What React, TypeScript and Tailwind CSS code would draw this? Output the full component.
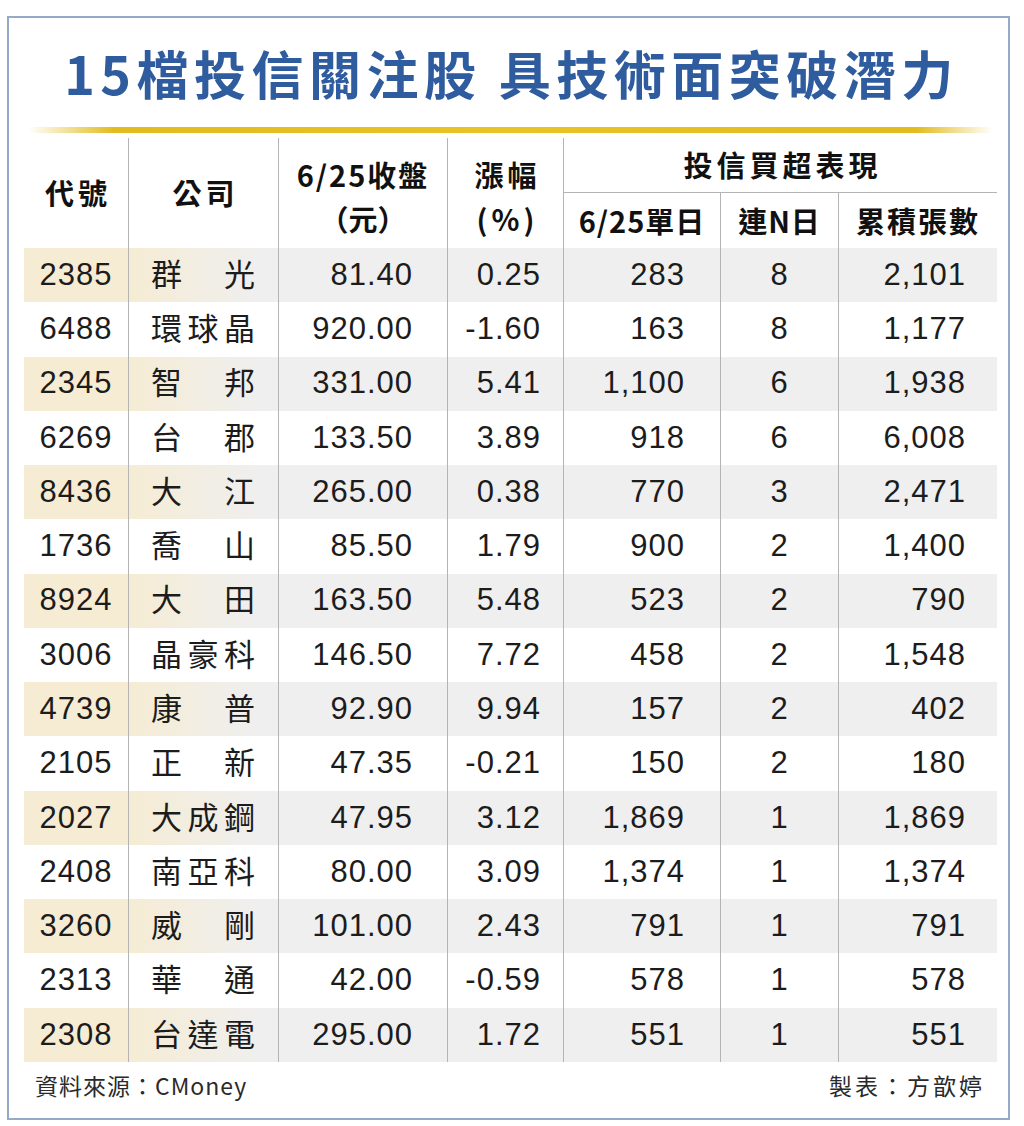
const rows: [string, string, string, string, string, string, string][] = [
  ["2385", "群光", "81.40", "0.25", "283", "8", "2,101"],
  ["6488", "環球晶", "920.00", "-1.60", "163", "8", "1,177"],
  ["2345", "智邦", "331.00", "5.41", "1,100", "6", "1,938"],
  ["6269", "台郡", "133.50", "3.89", "918", "6", "6,008"],
  ["8436", "大江", "265.00", "0.38", "770", "3", "2,471"],
  ["1736", "喬山", "85.50", "1.79", "900", "2", "1,400"],
  ["8924", "大田", "163.50", "5.48", "523", "2", "790"],
  ["3006", "晶豪科", "146.50", "7.72", "458", "2", "1,548"],
  ["4739", "康普", "92.90", "9.94", "157", "2", "402"],
  ["2105", "正新", "47.35", "-0.21", "150", "2", "180"],
  ["2027", "大成鋼", "47.95", "3.12", "1,869", "1", "1,869"],
  ["2408", "南亞科", "80.00", "3.09", "1,374", "1", "1,374"],
  ["3260", "威剛", "101.00", "2.43", "791", "1", "791"],
  ["2313", "華通", "42.00", "-0.59", "578", "1", "578"],
  ["2308", "台達電", "295.00", "1.72", "551", "1", "551"],
];

const cols = "grid grid-cols-[104px_150px_169px_116px_157px_118px_159px]";
const line = "border-l border-[#b4b4b4]";

function Row({ r, shaded }: { r: (typeof rows)[number]; shaded: boolean }) {
  const [code, name, close, pct, day, streak, total] = r;
  return (
    <div
      className={`${cols} h-[54.27px] text-[31px] tracking-[1px] text-[#1c1c1c] font-['Liberation_Sans','Noto_Sans_CJK_TC',sans-serif] ${
        shaded
          ? "bg-[linear-gradient(to_right,#f6ecd4_0px,#f6ecd4_105px,#efefef_235px,#efefef_100%)]"
          : "bg-white"
      }`}
    >
      <div className="flex items-center justify-center">{code}</div>
      <div
        className={`${line} flex items-center justify-between pl-[22px] pr-[23px] pb-[4px] tracking-normal text-[31px] font-['Noto_Sans_CJK_TC',sans-serif]`}
      >
        {name.split("").map((ch, i) => (
          <span key={i}>{ch}</span>
        ))}
      </div>
      <div className={`${line} flex items-center justify-end pr-[34px]`}>{close}</div>
      <div className={`${line} flex items-center justify-end pr-[22px]`}>{pct}</div>
      <div className={`${line} flex items-center justify-end pr-[35px]`}>{day}</div>
      <div className={`${line} flex items-center justify-center`}>{streak}</div>
      <div className={`${line} flex items-center justify-end pr-[31px]`}>{total}</div>
    </div>
  );
}

export default function App() {
  return (
    <div className="w-[1024px] h-[1126px] bg-white pt-[16px] pl-[7px]">
      <div className="w-[1003px] h-[1104px] border-2 border-[#97a9c8] bg-white flex flex-col">
        {/* Title */}
        <h1 className="mt-[30px] h-[50px] leading-[50px] text-center pl-[6px] text-[52px] font-bold tracking-[5.5px] text-[#2f5c9e] font-['Noto_Sans_CJK_TC',sans-serif]">
          15檔投信關注股 具技術面突破潛力
        </h1>
        <div className="mt-[29px] ml-[19px] w-[965px] h-[6px] rounded-full bg-[linear-gradient(to_right,rgba(230,190,30,0),#e2bb1c_9%,#e8c424_50%,#e2bb1c_92%,rgba(230,190,30,0))]" />

        {/* Table */}
        <div className="mt-[5px] ml-[15px] w-[973px]">
          <div
            className={`${cols} grid-rows-[55px_55px] text-[29px] font-bold text-[#111] tracking-[4px] font-['Noto_Sans_CJK_TC',sans-serif]`}
          >
            <div className="row-span-2 flex items-center justify-center pl-[4px]">代號</div>
            <div className={`${line} row-span-2 flex items-center justify-center pl-[4px]`}>公司</div>
            <div className={`${line} row-span-2 flex flex-col items-center justify-center pt-[6px] leading-[44px]`}>
              <span className="tracking-[2px]">6/25收盤</span>
              <span className="tracking-normal">（元）</span>
            </div>
            <div className={`${line} row-span-2 flex flex-col items-center justify-center pt-[6px] leading-[44px] pl-[4px]`}>
              <span>漲幅</span>
              <span>(%)</span>
            </div>
            <div className={`${line} col-span-3 border-b flex items-center justify-center pl-[4px]`}>
              投信買超表現
            </div>
            <div className={`${line} flex items-center justify-center tracking-[1px]`}>6/25單日</div>
            <div className={`${line} flex items-center justify-center tracking-[1px]`}>連N日</div>
            <div className={`${line} flex items-center justify-center tracking-[2px]`}>累積張數</div>
          </div>

          {rows.map((r, i) => (
            <Row key={r[0]} r={r} shaded={i % 2 === 0} />
          ))}

          {/* Footer */}
          <div className="h-[46px] flex items-center justify-between pl-[11px] pr-[12px] text-[23px] text-[#2a2a2a] font-['Noto_Sans_CJK_TC',sans-serif]">
            <span className="tracking-[1px]">資料來源：CMoney</span>
            <span className="tracking-[3px]">製表：方歆婷</span>
          </div>
        </div>
      </div>
    </div>
  );
}
